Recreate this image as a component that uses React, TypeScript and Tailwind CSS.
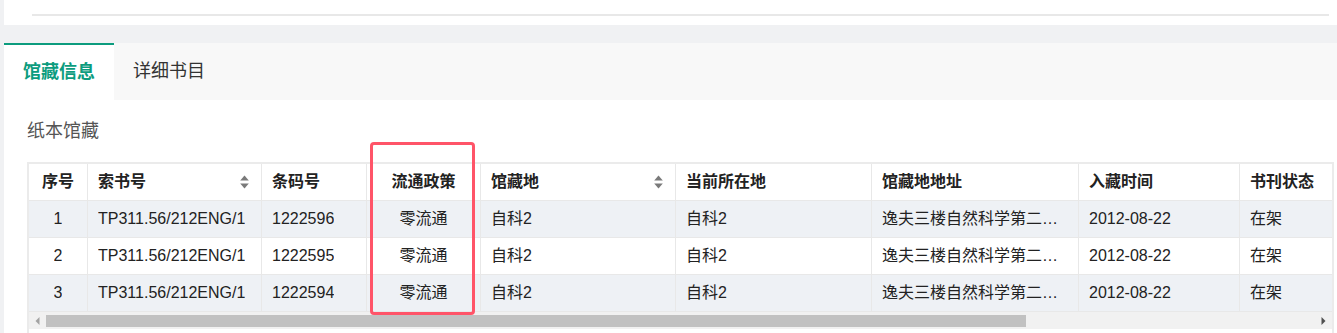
import React from "react";

const cols = [
  { key: "idx", title: "序号", w: "w-[59px]", center: true },
  { key: "call", title: "索书号", w: "w-[174px]", sort: true },
  { key: "bar", title: "条码号", w: "w-[105px]" },
  { key: "policy", title: "流通政策", w: "w-[114px]", center: true },
  { key: "loc", title: "馆藏地", w: "w-[195px]", sort: true },
  { key: "cur", title: "当前所在地", w: "w-[196px]" },
  { key: "addr", title: "馆藏地地址", w: "w-[207px]" },
  { key: "date", title: "入藏时间", w: "w-[161px]" },
  { key: "status", title: "书刊状态", w: "w-[161px]" },
  { key: "note", title: "备注", w: "w-[230px]" },
];

const rows = [
  { idx: "1", call: "TP311.56/212ENG/1", bar: "1222596", policy: "零流通", loc: "自科2", cur: "自科2", addr: "逸夫三楼自然科学第二书库", date: "2012-08-22", status: "在架", note: "" },
  { idx: "2", call: "TP311.56/212ENG/1", bar: "1222595", policy: "零流通", loc: "自科2", cur: "自科2", addr: "逸夫三楼自然科学第二书库", date: "2012-08-22", status: "在架", note: "" },
  { idx: "3", call: "TP311.56/212ENG/1", bar: "1222594", policy: "零流通", loc: "自科2", cur: "自科2", addr: "逸夫三楼自然科学第二书库", date: "2012-08-22", status: "在架", note: "" },
];

function SortIcon() {
  return (
    <svg width="9" height="14" viewBox="0 0 9 14" className="shrink-0">
      <path d="M4.5 0.5 L8.8 5.5 L0.2 5.5 Z" fill="#7a7a7a" />
      <path d="M4.5 13.5 L8.8 8.5 L0.2 8.5 Z" fill="#7a7a7a" />
    </svg>
  );
}

export default function App() {
  return (
    <div className="relative w-[1337px] h-[333px] overflow-hidden bg-[#f0f1f3] pl-[4px] font-['Liberation_Sans','Noto_Sans_CJK_SC',sans-serif]">
      {/* top panel */}
      <div className="h-[25px] bg-white pt-[14px] pl-[28px] pr-[8px]">
        <div className="h-[2px] bg-[#e8e8e8]" />
      </div>
      <div className="h-[18px]" />
      <div className="bg-white h-[300px]">
        {/* tabs */}
        <div className="h-[57px] bg-[#f8f8f8] flex">
          <div className="w-[110px] h-full bg-white border-t-2 border-[#0c9c7e] flex items-center justify-center text-[18px] font-bold text-[#0c9c7e]">
            馆藏信息
          </div>
          <div className="w-[110px] h-full flex items-center justify-center text-[18px] text-[#333]">
            详细书目
          </div>
        </div>
        <div className="pl-[23px] pr-[3px]">
          <div className="h-[62px] flex items-center text-[18px] text-[#555]">纸本馆藏</div>
          <div className="border-2 border-[#ebebeb] h-[200px] overflow-hidden bg-white">
            <div className="w-[1700px]">
              {/* header */}
              <div className="flex h-[37px] border-b border-[#e8e8e8] bg-white">
                {cols.map((c) => (
                  <div
                    key={c.key}
                    className={`${c.w} shrink-0 border-r border-[#e8e8e8] px-[10px] flex items-center text-[16px] font-bold text-[#222] ${c.center ? "justify-center" : "justify-between"} ${c.sort ? "pr-[12px]" : ""}`}
                  >
                    <span>{c.title}</span>
                    {c.sort ? <SortIcon /> : null}
                  </div>
                ))}
              </div>
              {rows.map((r, i) => (
                <div
                  key={i}
                  className={`flex h-[37px] border-b border-[#e8e8e8] ${i % 2 === 0 ? "bg-[#eef1f5]" : "bg-white"}`}
                >
                  {cols.map((c) => (
                    <div
                      key={c.key}
                      className={`${c.w} shrink-0 border-r border-[#e8e8e8] px-[10px] flex items-center text-[16px] text-[#222] overflow-hidden ${c.center ? "justify-center" : ""}`}
                    >
                      <span className="block truncate">{(r as Record<string, string>)[c.key]}</span>
                    </div>
                  ))}
                </div>
              ))}
            </div>
            {/* fake scrollbar */}
            <div className="flex h-[17px] bg-[#f1f1f1] items-center">
              <div className="w-[17px] h-full flex items-center justify-center">
                <svg width="5" height="8" viewBox="0 0 5 8">
                  <path d="M4.5 0 L0.5 4 L4.5 8 Z" fill="#a3a3a3" />
                </svg>
              </div>
              <div className="w-[980px] h-[12px] bg-[#c1c1c1]" />
              <div className="flex-1" />
              <div className="w-[17px] h-full flex items-center justify-center">
                <svg width="5" height="8" viewBox="0 0 5 8">
                  <path d="M0.5 0 L4.5 4 L0.5 8 Z" fill="#505050" />
                </svg>
              </div>
            </div>
          </div>
        </div>
      </div>
      {/* annotation highlight */}
      <div className="absolute left-[370px] top-[142px] w-[105px] h-[173px] border-[3px] border-[#ff5468] rounded-[4px]" />
    </div>
  );
}
